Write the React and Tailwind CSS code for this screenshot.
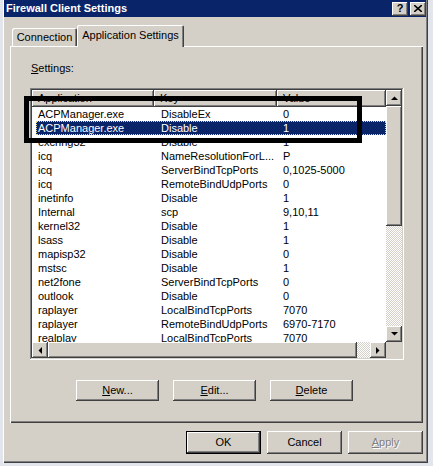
import React from "react";

const rows = [
  ["ACPManager.exe", "DisableEx", "0"],
  ["ACPManager.exe", "Disable", "1"],
  ["exchng32", "Disable", "1"],
  ["icq", "NameResolutionForL...", "P"],
  ["icq", "ServerBindTcpPorts", "0,1025-5000"],
  ["icq", "RemoteBindUdpPorts", "0"],
  ["inetinfo", "Disable", "1"],
  ["Internal", "scp", "9,10,11"],
  ["kernel32", "Disable", "1"],
  ["lsass", "Disable", "1"],
  ["mapisp32", "Disable", "0"],
  ["mstsc", "Disable", "1"],
  ["net2fone", "ServerBindTcpPorts", "0"],
  ["outlook", "Disable", "0"],
  ["raplayer", "LocalBindTcpPorts", "7070"],
  ["raplayer", "RemoteBindUdpPorts", "6970-7170"],
  ["realplay", "LocalBindTcpPorts", "7070"],
];

const raised =
  "bg-[#d4d0c8] shadow-[inset_-1px_-1px_#404040,inset_1px_1px_#ffffff,inset_-2px_-2px_#808080,inset_2px_2px_#d4d0c8]";
const checker =
  "bg-[repeating-conic-gradient(#d4d0c8_0%_25%,#ffffff_0%_50%)] bg-[length:2px_2px]";

const Arrow = ({ dir }) => {
  const pts = {
    up: "0,4 3.5,0.5 7,4",
    down: "0,0 7,0 3.5,3.5",
    left: "4,0 4,7 0.5,3.5",
    right: "0,0 0,7 3.5,3.5",
  }[dir];
  const vertical = dir === "up" || dir === "down";
  return (
    <svg width={vertical ? 7 : 4} height={vertical ? 4 : 7} className="block">
      <polygon points={pts} fill="#000" />
    </svg>
  );
};

const ScrollBtn = ({ dir }) => (
  <div className={`w-[16px] h-[16px] flex items-center justify-center ${raised}`}>
    <Arrow dir={dir} />
  </div>
);

const Button = ({ children, className = "" }) => (
  <div
    className={`w-[83px] h-[21px] flex items-center justify-center ${raised} ${className}`}
  >
    {children}
  </div>
);

export default function App() {
  return (
    <div className="relative w-[433px] h-[466px] overflow-hidden bg-[#e2e6ec] font-['Liberation_Sans',Arial,sans-serif] text-[11px] leading-[13px] text-black">
      <div className="ml-[3px] w-[425px] h-[463px] bg-[#d4d0c8] flex flex-col pl-[1px] pr-[2px] shadow-[inset_1px_0_#ffffff,inset_-1px_-1px_#404040,inset_-2px_-2px_#808080]">
        {/* title bar */}
        <div className="h-[17px] bg-[#0a246a] flex items-center justify-between pl-[2px]">
          <span className="text-white font-bold">Firewall Client Settings</span>
          <div className="flex gap-[2px]">
            <div className={`w-[16px] h-[14px] flex items-center justify-center font-bold text-[11px] ${raised}`}>
              ?
            </div>
            <div className={`w-[16px] h-[14px] flex items-center justify-center ${raised}`}>
              <svg width="8" height="7" className="block">
                <path d="M0 0 L8 7 M8 0 L0 7" stroke="#000" strokeWidth="1.6" />
              </svg>
            </div>
          </div>
        </div>

        {/* tabs */}
        <div className="mt-[8px] h-[21px] flex items-end pl-[8px]">
          <div className="w-[65px] h-[18px] flex items-center justify-center rounded-t-[2px] shadow-[inset_1px_1px_#ffffff,inset_-1px_0_#404040,inset_-2px_0_#808080]">
            Connection
          </div>
          <div className="relative z-10 -mb-[1px] w-[107px] h-[22px] bg-[#d4d0c8] flex items-start pt-[4px] justify-center rounded-t-[2px] shadow-[inset_1px_1px_#ffffff,inset_-1px_0_#404040,inset_-2px_0_#808080]">
            Application Settings
          </div>
        </div>

        {/* tab panel */}
        <div className="ml-[6px] w-[413px] h-[377px] flex flex-col pl-[20px] pt-[16px] shadow-[inset_1px_1px_#ffffff,inset_-1px_-1px_#404040,inset_-2px_-2px_#808080]">
          <div className="pl-[1px]">
            <span className="underline">S</span>ettings:
          </div>

          {/* list view */}
          <div className="mt-[13px] w-[374px] h-[272px] bg-white p-[2px] flex flex-col shadow-[inset_-1px_-1px_#ffffff,inset_1px_1px_#808080,inset_-2px_-2px_#d4d0c8,inset_2px_2px_#404040]">
            <div className="flex h-[252px]">
              <div className="w-[354px] flex flex-col overflow-hidden">
                <div className="h-[17px] flex shrink-0">
                  <div className={`w-[122px] pl-[6px] flex items-center ${raised}`}>Application</div>
                  <div className={`w-[123px] pl-[6px] flex items-center ${raised}`}>Key</div>
                  <div className={`flex-1 pl-[6px] flex items-center ${raised}`}>Value</div>
                </div>
                <div className="flex-1 overflow-hidden">
                  {rows.map((r, i) => {
                    const sel = i === 1;
                    return (
                      <div key={i} className="flex h-[14px] pl-[4px] leading-[14px]">
                        <div
                          className={`flex flex-1 whitespace-nowrap ${
                            sel
                              ? "bg-[#0a246a] text-white outline-1 outline-dotted outline-[#e8d890] -outline-offset-1"
                              : ""
                          }`}
                        >
                          <div className="w-[118px] pl-[2px] overflow-hidden">{r[0]}</div>
                          <div className="w-[123px] pl-[7px] overflow-hidden">{r[1]}</div>
                          <div className="flex-1 pl-[6px] overflow-hidden">{r[2]}</div>
                        </div>
                      </div>
                    );
                  })}
                </div>
              </div>
              {/* vertical scrollbar */}
              <div className="w-[16px] flex flex-col">
                <ScrollBtn dir="up" />
                <div className={`h-[120px] ${raised}`} />
                <div className={`flex-1 ${checker}`} />
                <ScrollBtn dir="down" />
              </div>
            </div>
            {/* horizontal scrollbar */}
            <div className="flex h-[16px]">
              <ScrollBtn dir="left" />
              <div className={`w-[309px] ${raised}`} />
              <div className={`w-[13px] ${checker}`} />
              <ScrollBtn dir="right" />
              <div className="w-[16px] bg-[#d4d0c8]" />
            </div>
          </div>

          <div className="mt-[20px] ml-[46px] flex gap-[14px]">
            <Button>
              <span className="underline">N</span>ew...
            </Button>
            <Button>
              <span className="underline">E</span>dit...
            </Button>
            <Button>
              <span className="underline">D</span>elete
            </Button>
          </div>
        </div>

        {/* dialog buttons */}
        <div className="mt-[8px] flex justify-end gap-[6px] pr-[3px]">
          <div className="w-[75px] h-[23px] border border-black flex">
            <div className={`flex-1 flex items-center justify-center ${raised}`}>OK</div>
          </div>
          <div className={`w-[75px] h-[23px] flex items-center justify-center ${raised}`}>Cancel</div>
          <div className={`w-[75px] h-[23px] flex items-center justify-center text-[#808080] [text-shadow:1px_1px_#ffffff] ${raised}`}>
            <span className="underline">A</span>pply
          </div>
        </div>
      </div>

      {/* annotation box */}
      <div className="absolute left-[24px] top-[96px] w-[338px] h-[47px] border-[5px] border-black" />
    </div>
  );
}
